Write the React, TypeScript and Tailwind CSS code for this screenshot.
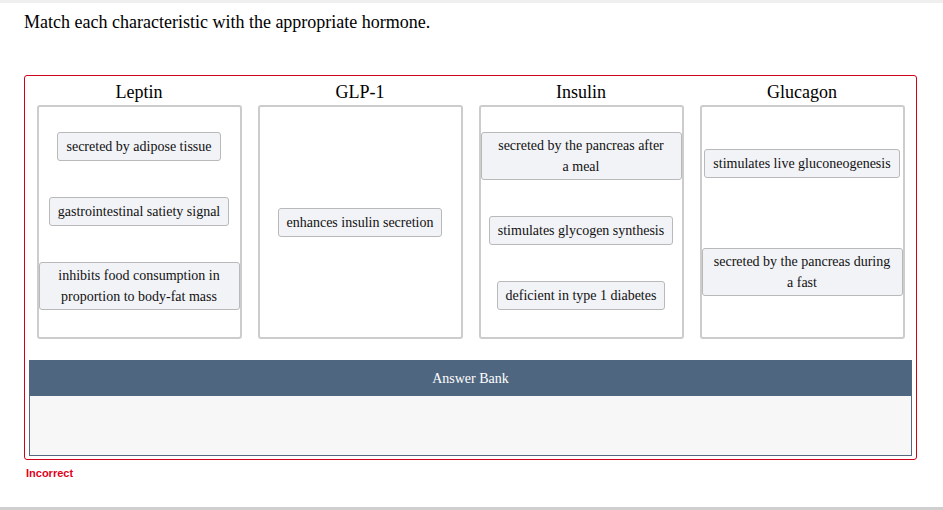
import React from 'react';

interface Tile {
  lines: string[];
}

interface Column {
  title: string;
  padTop: string;
  gap: string;
  tiles: Tile[];
}

const COLUMNS: Column[] = [
  {
    title: 'Leptin',
    padTop: 'pt-[25px]',
    gap: 'gap-[36px]',
    tiles: [
      { lines: ['secreted by adipose tissue'] },
      { lines: ['gastrointestinal satiety signal'] },
      { lines: ['inhibits food consumption in', 'proportion to body-fat mass'] },
    ],
  },
  {
    title: 'GLP-1',
    padTop: 'pt-[101px]',
    gap: 'gap-[36px]',
    tiles: [{ lines: ['enhances insulin secretion'] }],
  },
  {
    title: 'Insulin',
    padTop: 'pt-[25px]',
    gap: 'gap-[36px]',
    tiles: [
      { lines: ['secreted by the pancreas after', 'a meal'] },
      { lines: ['stimulates glycogen synthesis'] },
      { lines: ['deficient in type 1 diabetes'] },
    ],
  },
  {
    title: 'Glucagon',
    padTop: 'pt-[42px]',
    gap: 'gap-[70px]',
    tiles: [
      { lines: ['stimulates live gluconeogenesis'] },
      { lines: ['secreted by the pancreas during', 'a fast'] },
    ],
  },
];

function TileBox({ tile }: { tile: Tile }) {
  const wide = tile.lines.length > 1;
  return (
    <div
      className={`bg-[#f2f3f7] border border-[#b9b9b9] rounded-[3px] px-[8px] py-[2px] min-h-[29px] flex flex-col justify-center text-center text-[14px] leading-[21px] text-[#111] whitespace-nowrap ${wide ? 'w-[201px]' : ''}`}
    >
      {tile.lines.map((l) => (
        <span key={l}>{l}</span>
      ))}
    </div>
  );
}

export default function App() {
  return (
    <div
      className="w-[943px] h-[510px] bg-white flex flex-col overflow-hidden"
      style={{ fontFamily: '"Liberation Serif", "Times New Roman", serif' }}
    >
      <div className="h-[3px] bg-[#efefef] flex-shrink-0" />
      <div className="px-[24px] flex-1">
        <h1 className="mt-[9px] text-[18px] leading-[21px] text-black font-normal">
          Match each characteristic with the appropriate hormone.
        </h1>

        <div className="mt-[42px] w-[893px] border border-[#d0021b] rounded-[3px] px-[4px] pb-[3px]">
          <div className="flex justify-center gap-[16px]">
            {COLUMNS.map((c) => (
              <div key={c.title} className="w-[205px] flex flex-col">
                <div className="pt-[5px] mb-[1px] text-center text-[18px] leading-[23px] text-black">{c.title}</div>
                <div
                  className={`h-[234px] border-2 border-[#cccccc] rounded-[3px] flex flex-col items-center ${c.padTop} ${c.gap}`}
                >
                  {c.tiles.map((t) => (
                    <TileBox key={t.lines[0]} tile={t} />
                  ))}
                </div>
              </div>
            ))}
          </div>

          <div className="mt-[21px] h-[36px] bg-[#4f6680] flex items-center justify-center text-white text-[14px]">
            Answer Bank
          </div>
          <div className="h-[60px] bg-[#f7f7f7] border border-t-0 border-[#56687d]" />
        </div>

        <p
          className="mt-[6px] ml-[2px] text-[11px] leading-[14px] font-bold text-[#e2001a]"
          style={{ fontFamily: '"Liberation Sans", Arial, sans-serif' }}
        >
          Incorrect
        </p>
      </div>
      <div className="h-[3px] bg-[#cfcfcf] flex-shrink-0" />
    </div>
  );
}
